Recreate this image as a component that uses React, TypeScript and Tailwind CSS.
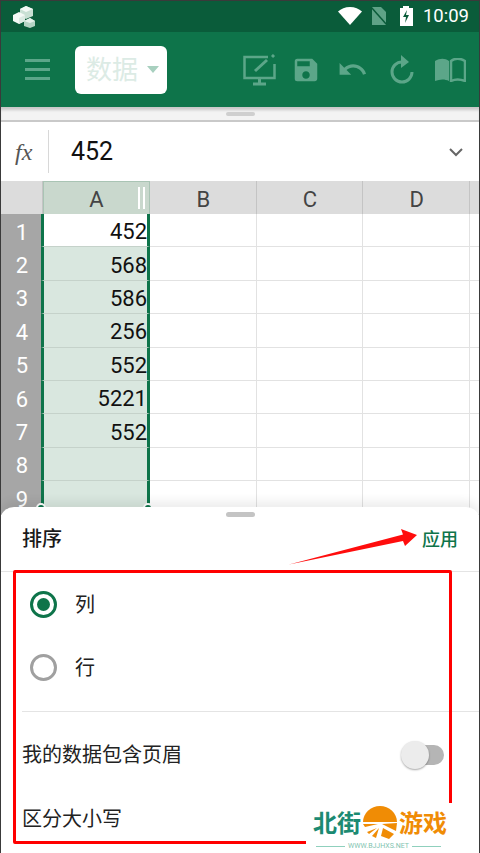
import { MdSave, MdUndo } from "react-icons/md";

const FONT = "font-['Roboto','Noto_Sans_CJK_SC',sans-serif]";

const rows = [
  { id: 1, value: "452" },
  { id: 2, value: "568" },
  { id: 3, value: "586" },
  { id: 4, value: "256" },
  { id: 5, value: "552" },
  { id: 6, value: "5221" },
  { id: 7, value: "552" },
  { id: 8, value: "" },
  { id: 9, value: "" },
];

function StatusBar() {
  return (
    <div className="flex h-8 shrink-0 items-center bg-[#0a5c3a] pl-[13px] pr-[11px]">
      <svg width="23" height="23" viewBox="0 0 23 23">
        <path d="M13 1l7 3v7l-7 3-6-3V4z" fill="#c9e0d4" />
        <path d="M13 1l7 3-7 3-6-3z" fill="#f4f9f6" />
        <path d="M6 7l6 3v6l-6 3-6-3v-6z" fill="#f4f9f6" />
        <path d="M6 13l6-3v6l-6 3z" fill="#dcebe3" />
        <path d="M17 13l5 3v5l-5 2-6-2v-5z" fill="#b5d3c4" />
        <path d="M17 13l5 3-5 2-6-2z" fill="#e6f1eb" />
      </svg>
      <div className="ml-auto flex items-center">
        <svg width="24" height="18" viewBox="0 0 24 18" fill="#ffffff">
          <path d="M0 4.5C3 1.8 7.200 0 12 0s9 1.800 12 4.500L12 18z" />
        </svg>
        <svg className="ml-[8px]" width="18" height="20" viewBox="0 0 18 20">
          <path d="M2 1h9l5 5v13H2z" fill="#5fa287" />
          <path d="M1 1l16 18" stroke="#0a5c3a" strokeWidth="1.500" />
        </svg>
        <svg className="ml-[11px]" width="14" height="20" viewBox="0 0 14 20">
          <path d="M4 0h6v2h4v18H1V2h3z" fill="#ffffff" />
          <path d="M8 4L4 11h3l-1 6 4-8H7z" fill="#0a5c3a" />
        </svg>
        <span className={`ml-[10px] text-[18.500px] leading-none text-white ${FONT}`}>10:09</span>
      </div>
    </div>
  );
}

function Toolbar() {
  return (
    <div className="flex h-[75px] shrink-0 items-center bg-[#0e744a] pl-[25px]">
      <div className="flex w-[25px] flex-col gap-[6px]">
        <div className="h-[3px] bg-[#5ca689]" />
        <div className="h-[3px] bg-[#5ca689]" />
        <div className="h-[3px] bg-[#5ca689]" />
      </div>
      <div className="ml-[25px] flex h-[48px] w-[92px] items-center rounded-[6px] bg-white pl-[11px]">
        <span className={`text-[26px] leading-none text-[#dcebe5] ${FONT}`}>数据</span>
        <div className="ml-[9px] h-0 w-0 border-x-[6px] border-t-[7px] border-x-transparent border-t-[#a8d0bf]" />
      </div>
      <div className="ml-[76px] flex items-center text-[#5ca689]">
        <svg width="33" height="32" viewBox="0 0 33 32" fill="none" stroke="currentColor" strokeWidth="2.500">
          <path d="M25 3H1.500v21h30V10" />
          <path d="M12 17L24 6" strokeWidth="3" />
          <path d="M29 3l2-2" strokeWidth="3" />
          <path d="M16.500 24v5M10 30h13" strokeWidth="3" />
        </svg>
        <MdSave className="ml-[15px]" size={30} />
        <MdUndo className="ml-[16px]" size={31} />
        <svg className="ml-[22px]" width="24" height="29" viewBox="0 0 24 29" fill="none" stroke="currentColor" strokeWidth="3">
          <path d="M12 7a10 10 0 1 0 10 10" />
          <path d="M11 0l8 7-8 6z" fill="currentColor" stroke="none" />
        </svg>
        <svg className="ml-[20px]" width="32" height="24" viewBox="0 0 32 24">
          <path d="M1 3c5-3 10-3 14 0v20c-4-2-9-2-14 0z" fill="currentColor" />
          <path d="M17 3c4-3 9-3 14 0v20c-5-2-10-2-14 0z" fill="none" stroke="currentColor" strokeWidth="2.500" />
        </svg>
      </div>
    </div>
  );
}

function FormulaBar() {
  return (
    <>
      <div className="flex h-[15px] shrink-0 items-center justify-center border-b-2 border-[#c9c9c9] bg-[#f3f3f3] shadow-[inset_0_3px_3px_rgba(0,0,0,0.18)]">
        <div className="h-[4px] w-[29px] rounded-full bg-[#cfcfcf]" />
      </div>
      <div className="flex h-[59px] shrink-0 items-center bg-white">
        <span className="w-[48px] pl-[15px] font-['Liberation_Serif',serif] text-[24px] italic text-[#555555]">fx</span>
        <div className="h-[43px] w-px bg-[#d8d8d8]" />
        <span className={`ml-[22px] text-[25px] text-[#111111] ${FONT}`}>452</span>
        <svg className="ml-auto mr-[16px]" width="16" height="10" viewBox="0 0 16 10" fill="none" stroke="#666666" strokeWidth="2">
          <path d="M2 2l6 6 6-6" />
        </svg>
      </div>
    </>
  );
}

function Sheet() {
  return (
    <div className={`relative flex-1 overflow-hidden bg-white ${FONT}`}>
      <div className="flex h-[33px] bg-[#dcdcdc] text-[22px] text-[#444444]">
        <div className="w-[43px] shrink-0 border-r border-[#c4c4c4]" />
        <div className="relative flex w-[107px] shrink-0 items-center justify-center border border-b-0 border-[#a9c4b4] bg-[#c9d8cd] pt-[3px]">
          A
          <div className="absolute right-[4px] top-[5px] h-[22px] w-[7px] border-x-[2.500px] border-white" />
        </div>
        {["B", "C", "D"].map((col) => (
          <div
            key={col}
            className="flex w-[106.670px] shrink-0 items-center justify-center border-r border-[#c4c4c4] pl-[1px] pt-[3px]"
          >
            {col}
          </div>
        ))}
      </div>
      {rows.map((row) => (
        <div key={row.id} className="flex h-[33.400px]">
          <div className="flex w-[41px] shrink-0 items-center justify-center bg-[#a6a6a6] pl-[3px] pt-[3px] text-[22px] text-white">
            {row.id}
          </div>
          <div
            className={`flex w-[109px] shrink-0 items-center justify-end border-x-[3px] border-b border-x-[#0e744a] border-b-[#c5d2ca] pt-[3px] text-[22px] text-[#111111] ${
              row.id === 1 ? "bg-white" : "bg-[#d9e7df]"
            }`}
          >
            {row.value}
          </div>
          {[1, 2, 3, 4].map((col) => (
            <div
              key={col}
              className={`h-full border-b border-r border-[#e2e2e2] ${col === 4 ? "w-[10px]" : "w-[106.670px]"} shrink-0`}
            />
          ))}
        </div>
      ))}
      <div className="absolute left-[36px] top-[322px] h-[10px] w-[10px] rounded-full border-2 border-white bg-[#0e744a]" />
      <div className="absolute left-[143px] top-[322px] h-[10px] w-[10px] rounded-full border-2 border-white bg-[#0e744a]" />
    </div>
  );
}

function Radio({ checked, label }: { checked?: boolean; label: string }) {
  return (
    <div className="flex h-[63px] items-center">
      <div
        className={`flex h-[27px] w-[27px] items-center justify-center rounded-full border-[3px] ${
          checked ? "border-[#0e744a]" : "border-[#a0a0a0]"
        }`}
      >
        {checked ? <div className="h-[13px] w-[13px] rounded-full bg-[#0e744a]" /> : null}
      </div>
      <span className="ml-[18px] text-[20px] text-[#222222]">{label}</span>
    </div>
  );
}

function BottomSheet() {
  return (
    <div className={`absolute inset-x-0 bottom-0 top-[507px] rounded-t-[14px] bg-white shadow-[0_-6px_10px_rgba(0,0,0,0.07)] ${FONT}`}>
      <div className="flex justify-center pt-[5px]">
        <div className="h-[5px] w-[29px] rounded-full bg-[#c4c4c4]" />
      </div>
      <div className="flex h-[55px] items-center justify-between border-b border-[#e4e4e4] pl-[22px] pr-[22px] pb-[11px]">
        <span className="text-[20px] font-medium text-[#1a1a1a]">排序</span>
        <span className="pt-[2px] text-[18px] font-medium text-[#0e744a]">应用</span>
      </div>
      <div className="pl-[30px] pt-[1px]">
        <Radio checked label="列" />
        <Radio label="行" />
      </div>
      <div className="ml-[22px] mt-[12px] border-t border-[#e4e4e4]" />
      <div className="flex h-[85px] items-center justify-between pl-[22px] pr-[36px]">
        <span className="text-[20px] text-[#222222]">我的数据包含页眉</span>
        <div className="relative h-[20px] w-[39px] rounded-full bg-[#b5b5b5]">
          <div className="absolute -left-[4px] -top-[4px] h-[28px] w-[28px] rounded-full bg-[#ececec] shadow-[0_1px_2px_rgba(0,0,0,0.35)]" />
        </div>
      </div>
      <div className="pl-[22px] pt-[1px] text-[20px] leading-[42px] text-[#222222]">区分大小写</div>
    </div>
  );
}

function Annotations() {
  return (
    <>
      <div className="absolute left-[13px] top-[570px] h-[274px] w-[439px] rounded-[2px] border-[3px] border-[#ff0000]" />
      <svg className="absolute left-[285px] top-[525px]" width="135" height="42" viewBox="0 0 135 42" fill="#ff0d0d">
        <path d="M4 39.500L118 9.500 116 4 132 10 120 21 118 16z" />
      </svg>
    </>
  );
}

function Watermark() {
  return (
    <div className={`absolute bottom-0 right-0 flex h-[50px] w-[174px] flex-col bg-white pl-[7px] ${FONT}`}>
      <div className="flex items-center pt-[3px]">
        <span className="w-[48px] whitespace-nowrap text-[24px] font-bold leading-[32px] text-[#1b8a72]">北街</span>
        <svg width="38" height="36" viewBox="0 0 38 36">
          <path d="M2 16a17 16 0 0 1 34 0z" fill="#f08c05" />
          <path d="M2 18h15L4 21zM21 18l15-1-1 8zM16 22L6 26l2 2zM18 22l-7 8 4 2zM22 22l11 6-5 5-8-3z" fill="#f08c05" />
        </svg>
        <span className="w-[48px] whitespace-nowrap text-[24px] font-bold leading-[32px] text-[#f08c05]">游戏</span>
      </div>
      <div className="flex w-[128px] items-center gap-[3px] pl-[3px]">
        <div className="h-px flex-1 bg-[#8fd0bd]" />
        <span className="text-[7px] leading-[9px] text-[#7fc4b0]">WWW.BJJHXS.NET</span>
        <div className="h-px flex-1 bg-[#8fd0bd]" />
      </div>
    </div>
  );
}

export default function App() {
  return (
    <div className="relative flex h-[853px] w-[480px] flex-col overflow-hidden">
      <StatusBar />
      <Toolbar />
      <FormulaBar />
      <Sheet />
      <BottomSheet />
      <Annotations />
      <Watermark />
      <div className="pointer-events-none absolute inset-0 border-x border-t border-[#3a3a3a]" />
    </div>
  );
}
